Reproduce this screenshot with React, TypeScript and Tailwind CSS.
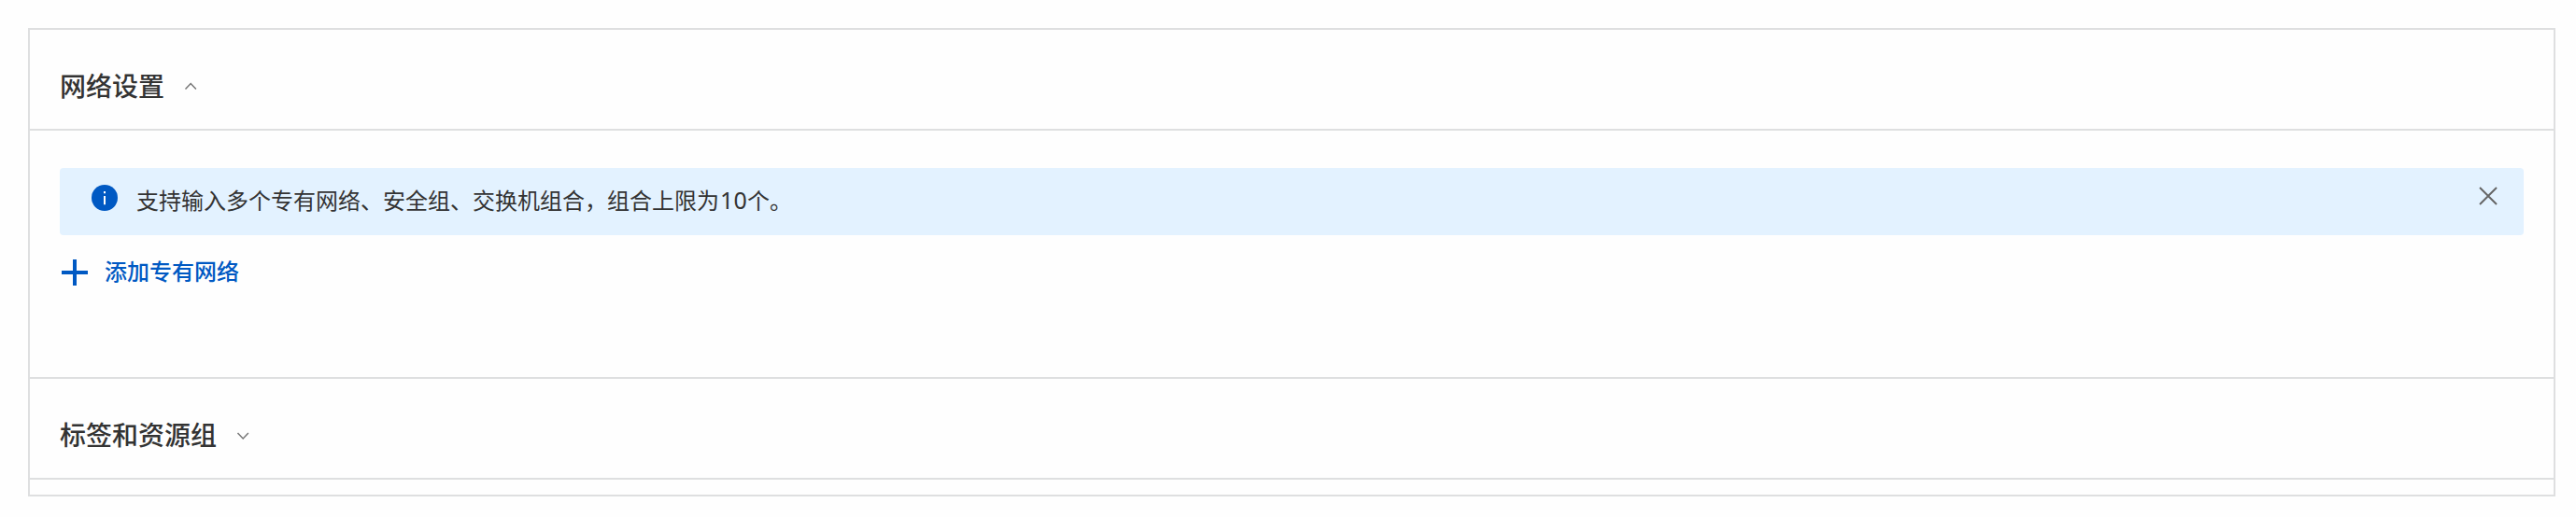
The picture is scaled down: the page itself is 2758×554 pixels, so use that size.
export default function App() {
  return (
    <div className="h-[554px] w-full bg-[#fefefe] px-[30px] pt-[30px] text-[#333] [font-family:'Noto_Sans_CJK_SC',sans-serif]">
      <main className="flex h-[502px] w-[2706px] flex-col border-2 border-[#dedfe0]">
        <header className="flex h-[108px] items-center border-b-2 border-[#dedfe0] px-8 pt-3">
          <h2 className="text-[28px] font-medium leading-10">网络设置</h2>
          <svg className="ml-5 size-4" viewBox="0 0 16 16" fill="none" stroke="#777" strokeWidth="1.5"><path d="M2.5 12.5l5.7-6 5.7 6" /></svg>
        </header>
        <section className="h-[266px] border-b-2 border-[#dedfe0] px-8 pt-10">
          <div className="flex h-[72px] items-start rounded-[4px] bg-[#e3f2ff] pl-[34px] pr-7">
            <svg className="mt-[18px] size-7" viewBox="0 0 28 28"><circle cx="14" cy="14" r="14" fill="#0059c3" /><path d="M14 7v2.2M14 12v9.2" stroke="white" strokeWidth="2" /></svg>
            <p className="ml-5 mt-3.5 text-[24px] leading-10">支持输入多个专有网络、安全组、交换机组合，组合上限为<span className="pl-px text-[25px] leading-none tracking-[0.2px] [font-family:'Noto_Sans',sans-serif]">10</span>个。</p>
            <button className="ml-auto mt-5" aria-label="关闭"><svg className="size-5" viewBox="0 0 20 20" stroke="#666" strokeWidth="2"><path d="M1 1l18 18M19 1L1 19" /></svg></button>
          </div>
          <button className="mt-5 flex h-10 items-center pl-0.5 text-[24px] font-medium text-[#0059c3]">
            <svg className="size-7" viewBox="0 0 28 28" stroke="currentColor" strokeWidth="4"><path d="M14 0v28M0 14h28" /></svg>
            <span className="-mt-1 ml-[18px] leading-10">添加专有网络</span>
          </button>
        </section>
        <header className="flex h-[108px] items-center border-b-2 border-[#dedfe0] px-8 pt-3">
          <h2 className="text-[28px] font-medium leading-10">标签和资源组</h2>
          <svg className="ml-5 size-4" viewBox="0 0 16 16" fill="none" stroke="#777" strokeWidth="1.5"><path d="M2.5 7l5.7 6 5.7-6" /></svg>
        </header>
      </main>
    </div>
  );
}
